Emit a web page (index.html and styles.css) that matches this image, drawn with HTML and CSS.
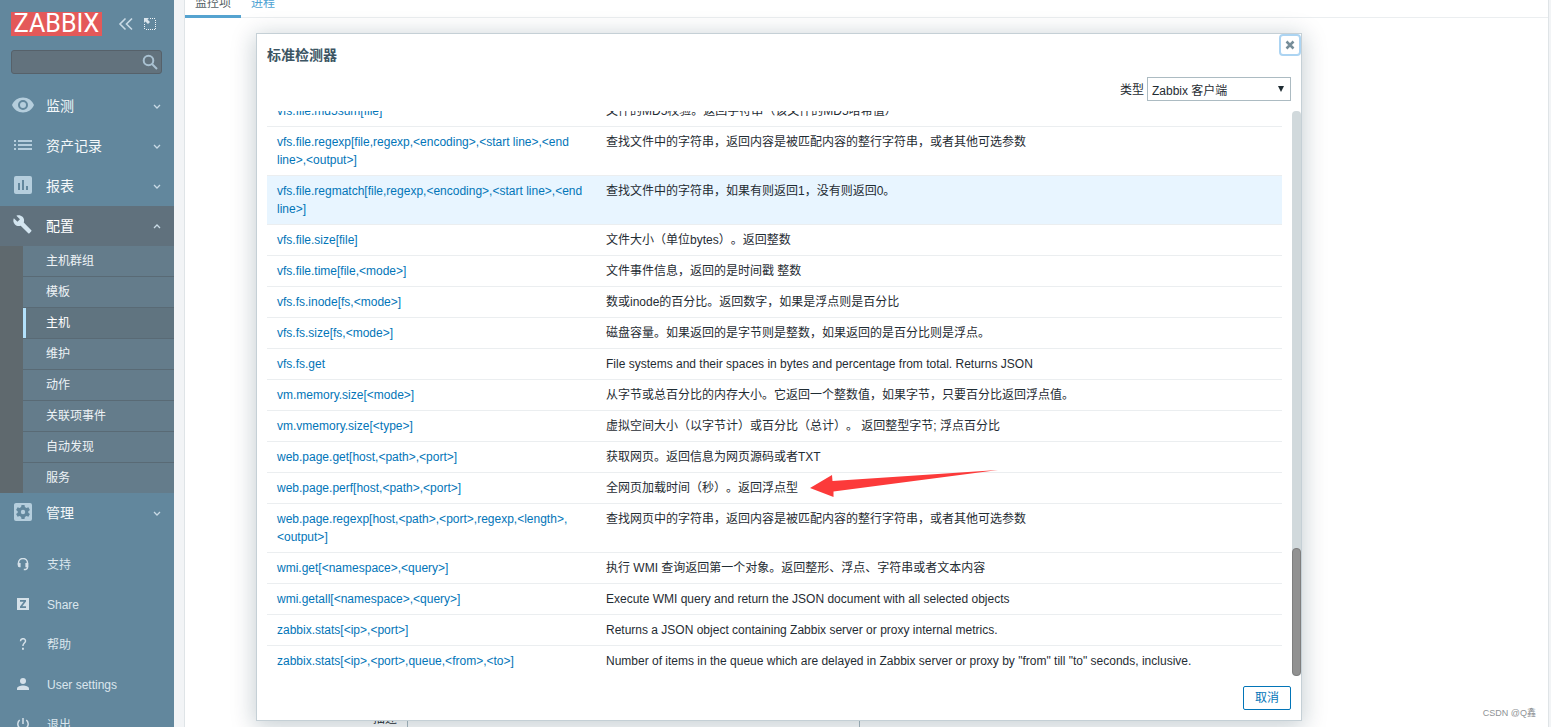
FILE: index.html
```html
<!DOCTYPE html>
<html lang="zh-CN">
<head>
<meta charset="utf-8">
<title>Zabbix</title>
<link rel="stylesheet" href="styles.css">
</head>
<body>
<aside class="sidebar">
  <div class="brand">
    <a class="logo" href="#">ZABBIX</a>
    <button class="icon-btn" type="button" aria-label="收起"><svg width="16" height="16" viewBox="0 0 16 16"><path d="M7.500 2.500L2 8l5.500 5.500M14 2.500L8.500 8l5.500 5.500"/></svg></button>
    <button class="icon-btn" type="button" aria-label="隐藏"><svg width="14" height="14" viewBox="0 0 14 14"><path class="dots" d="M7 1.500h6M12.500 3v10M1.500 7v6M3 12.500h9"/><path class="solid" d="M1 1h5L4.500 2.500 7 5 5 7 2.500 4.500 1 6z"/></svg></button>
  </div>
  <form class="search">
    <input class="search-input" type="text" aria-label="搜索">
    <button class="search-btn" type="button" aria-label="搜索"><svg width="16" height="16" viewBox="0 0 16 16"><circle cx="6.500" cy="6.500" r="4.800"/><path d="M10 10l5 5"/></svg></button>
  </form>
  <nav class="menu">
    <a class="menu-item" href="#"><svg class="menu-icon" viewBox="0 1 24 24"><path d="M12 4.500C7 4.500 2.700 7.600 1 12c1.700 4.400 6 7.500 11 7.500s9.300-3.100 11-7.500c-1.700-4.400-6-7.500-11-7.500zM12 17a5 5 0 1 1 0-10 5 5 0 0 1 0 10zm0-8a3 3 0 1 0 0 6 3 3 0 0 0 0-6z"/></svg><span>监测</span><svg class="chevron" viewBox="0 0 8 8"><path d="M1 3l3 3 3-3"/></svg></a>
    <a class="menu-item" href="#"><svg class="menu-icon" viewBox="0 1 24 24"><path d="M3 7h2v2H3zM3 11h2v2H3zM3 15h2v2H3zM7 7h14v2H7zM7 11h14v2H7zM7 15h14v2H7z"/></svg><span>资产记录</span><svg class="chevron" viewBox="0 0 8 8"><path d="M1 3l3 3 3-3"/></svg></a>
    <a class="menu-item" href="#"><svg class="menu-icon" viewBox="0 1 24 24"><path d="M19 3H5a2 2 0 0 0-2 2v14c0 1.100.9 2 2 2h14a2 2 0 0 0 2-2V5a2 2 0 0 0-2-2zM9 17H7v-7h2zm4 0h-2V7h2zm4 0h-2v-4h2z"/></svg><span>报表</span><svg class="chevron" viewBox="0 0 8 8"><path d="M1 3l3 3 3-3"/></svg></a>
    <a class="menu-item is-open" href="#"><svg class="menu-icon" viewBox="2.500 4 26 26"><path d="M24.500 21.500l-8.200-8.200c.8-2.100.4-4.500-1.300-6.200-1.800-1.800-4.500-2.200-6.700-1.200l3.900 3.900-2.700 2.700-3.900-3.900c-1.100 2.200-.6 4.900 1.200 6.700 1.700 1.700 4.100 2.100 6.200 1.300l8.200 8.200c.4.400.9.400 1.300 0l2-2c.4-.4.400-1 0-1.300z"/></svg><span>配置</span><svg class="chevron" viewBox="0 0 8 8"><path d="M1 6l3-3 3 3"/></svg></a>
    <ul class="submenu">
      <li><a href="#">主机群组</a></li>
      <li><a href="#">模板</a></li>
      <li class="is-selected"><a href="#">主机</a></li>
      <li><a href="#">维护</a></li>
      <li><a href="#">动作</a></li>
      <li><a href="#">关联项事件</a></li>
      <li><a href="#">自动发现</a></li>
      <li><a href="#">服务</a></li>
    </ul>
    <a class="menu-item" href="#"><svg class="menu-icon" viewBox="0 1 24 24"><path fill-rule="evenodd" d="M5 3h14a2 2 0 0 1 2 2v14a2 2 0 0 1-2 2H5a2 2 0 0 1-2-2V5c0-1.100.9-2 2-2zm5.500 2l-.4 2.100-1.500.9-2-.7-1.500 2.600 1.600 1.400v1.400l-1.600 1.400 1.500 2.600 2-.7 1.500.9.400 2.100h3l.4-2.100 1.500-.9 2 .7 1.500-2.600-1.600-1.400v-1.400l1.600-1.400-1.500-2.600-2 .7-1.500-.9-.4-2.100zM12 9.800a2.200 2.200 0 1 1 0 4.400 2.200 2.200 0 0 1 0-4.400z"/></svg><span>管理</span><svg class="chevron" viewBox="0 0 8 8"><path d="M1 3l3 3 3-3"/></svg></a>
  </nav>
  <nav class="user-menu">
    <a class="user-item" href="#"><svg class="user-icon" viewBox="0 1 14 14"><path class="line" d="M2.500 8V6a4.500 4.500 0 0 1 9 0V10c0 1.800-1 2.600-3.700 2.600"/><path d="M1.800 6h2.800v4.200H3.200a1.400 1.400 0 0 1-1.400-1.400zM9.400 6h2.800v4.200H9.400z"/></svg><span>支持</span></a>
    <a class="user-item" href="#"><svg class="user-icon" viewBox="0 1 14 14"><path fill-rule="evenodd" d="M1 1h12v12H1zm3 2v1.700h3.700L4 9.500V11h6V9.300H6.300L10 4.500V3z"/></svg><span>Share</span></a>
    <a class="user-item" href="#"><svg class="user-icon" viewBox="0 1 14 14"><path class="line" d="M4.500 4.200c0-3.400 5-3.200 5-.3 0 2.200-2.600 2.100-2.600 5"/><path d="M6 10.800h1.900v1.900H6z"/></svg><span>帮助</span></a>
    <a class="user-item" href="#"><svg class="user-icon" viewBox="0 1 14 14"><circle cx="7" cy="4" r="3"/><path d="M1 13v-1.500C1 9.500 4.500 8.500 7 8.500s6 1 6 3V13z"/></svg><span>User settings</span></a>
    <a class="user-item" href="#"><svg class="user-icon" viewBox="0 1 14 14"><path class="line" d="M7 1v6M3.700 3a5.200 5.200 0 1 0 6.600 0"/></svg><span>退出</span></a>
  </nav>
</aside>

<main class="page">
  <section class="panel">
    <nav class="tabs">
      <a class="tab is-current" href="#">监控项</a>
      <a class="tab" href="#">进程</a>
    </nav>
    <form class="item-form">
      <label class="form-label" for="description">描述</label>
      <textarea class="form-text" id="description"></textarea>
    </form>
  </section>
</main>

<div class="dialog" role="dialog" aria-labelledby="dialog-title">
  <button class="close-btn" type="button" aria-label="关闭"><svg width="10" height="10" viewBox="0 0 10 10"><path d="M1.500 1.500l7 7M8.500 1.500l-7 7"/></svg></button>
  <h1 class="dialog-title" id="dialog-title">标准检测器</h1>
  <div class="controls">
    <label for="type">类型</label>
    <span class="select-wrap"><select id="type"><option>Zabbix 客户端</option></select></span>
  </div>
  <div class="list">
    <div class="rows">
      <table>
        <tbody>
          <tr><td><a href="#">vfs.file.md5sum[file]</a></td><td>文件的MD5校验。返回字符串（该文件的MD5哈希值）</td></tr>
          <tr><td><a href="#">vfs.file.regexp[file,regexp,&lt;encoding&gt;,&lt;start line&gt;,&lt;end line&gt;,&lt;output&gt;]</a></td><td>查找文件中的字符串，返回内容是被匹配内容的整行字符串，或者其他可选参数</td></tr>
          <tr class="is-hover"><td><a href="#">vfs.file.regmatch[file,regexp,&lt;encoding&gt;,&lt;start line&gt;,&lt;end line&gt;]</a></td><td>查找文件中的字符串，如果有则返回1，没有则返回0。</td></tr>
          <tr><td><a href="#">vfs.file.size[file]</a></td><td>文件大小（单位bytes）。返回整数</td></tr>
          <tr><td><a href="#">vfs.file.time[file,&lt;mode&gt;]</a></td><td>文件事件信息，返回的是时间戳 整数</td></tr>
          <tr><td><a href="#">vfs.fs.inode[fs,&lt;mode&gt;]</a></td><td>数或inode的百分比。返回数字，如果是浮点则是百分比</td></tr>
          <tr><td><a href="#">vfs.fs.size[fs,&lt;mode&gt;]</a></td><td>磁盘容量。如果返回的是字节则是整数，如果返回的是百分比则是浮点。</td></tr>
          <tr><td><a href="#">vfs.fs.get</a></td><td>File systems and their spaces in bytes and percentage from total. Returns JSON</td></tr>
          <tr><td><a href="#">vm.memory.size[&lt;mode&gt;]</a></td><td>从字节或总百分比的内存大小。它返回一个整数值，如果字节，只要百分比返回浮点值。</td></tr>
          <tr><td><a href="#">vm.vmemory.size[&lt;type&gt;]</a></td><td>虚拟空间大小（以字节计）或百分比（总计）。 返回整型字节; 浮点百分比</td></tr>
          <tr><td><a href="#">web.page.get[host,&lt;path&gt;,&lt;port&gt;]</a></td><td>获取网页。返回信息为网页源码或者TXT</td></tr>
          <tr><td><a href="#">web.page.perf[host,&lt;path&gt;,&lt;port&gt;]</a></td><td><span class="marked">全网页加载时间（秒）。返回浮点型<svg class="arrow" width="188" height="28" viewBox="0 0 188 28"><path d="M0 18L22 5l.5 6L188 0 23.500 21.500V27z"/></svg></span></td></tr>
          <tr><td><a href="#">web.page.regexp[host,&lt;path&gt;,&lt;port&gt;,regexp,&lt;length&gt;,&lt;output&gt;]</a></td><td>查找网页中的字符串，返回内容是被匹配内容的整行字符串，或者其他可选参数</td></tr>
          <tr><td><a href="#">wmi.get[&lt;namespace&gt;,&lt;query&gt;]</a></td><td>执行 WMI 查询返回第一个对象。返回整形、浮点、字符串或者文本内容</td></tr>
          <tr><td><a href="#">wmi.getall[&lt;namespace&gt;,&lt;query&gt;]</a></td><td>Execute WMI query and return the JSON document with all selected objects</td></tr>
          <tr><td><a href="#">zabbix.stats[&lt;ip&gt;,&lt;port&gt;]</a></td><td>Returns a JSON object containing Zabbix server or proxy internal metrics.</td></tr>
          <tr><td><a href="#">zabbix.stats[&lt;ip&gt;,&lt;port&gt;,queue,&lt;from&gt;,&lt;to&gt;]</a></td><td>Number of items in the queue which are delayed in Zabbix server or proxy by "from" till "to" seconds, inclusive.</td></tr>
        </tbody>
      </table>
    </div>
    <div class="scrollbar"><div class="thumb"></div></div>
  </div>
  <div class="dialog-footer"><button class="cancel-btn" type="button">取消</button></div>
</div>
<div class="watermark">CSDN @Q鑫</div>
</body>
</html>
```

FILE: styles.css
```css
* { box-sizing: border-box; }

body {
  display: flex;
  height: 100vh;
  margin: 0;
  overflow: hidden;
  background: #f2f4f6;
  color: #1f2c33;
  font: 12px/18px "Liberation Sans", "Noto Sans CJK SC", sans-serif;
  text-spacing-trim: space-all;
}

a { color: #0275b8; text-decoration: none; }
button, select, input, textarea { font: inherit; }
button { padding: 0; border: 0; background: none; }

/* Sidebar */
.sidebar {
  flex: 0 0 174px;
  height: 100vh;
  overflow: hidden;
  background: #62879d;
}

.brand {
  display: flex;
  align-items: center;
  gap: 9px;
  padding: 12px 11px 0;
}

.logo {
  width: 91px;
  margin-right: 7px;
  background: #e45959;
  color: #fff;
  font: 25px/24px Roboto, sans-serif;
  text-align: center;
}

.icon-btn { display: flex; }
.icon-btn path { fill: none; stroke: #c9dae5; stroke-width: 1.6; }
.icon-btn .dots { stroke: #f0f5f8; stroke-width: 1; stroke-dasharray: 1 1; }
.icon-btn .solid { fill: #dbe6ed; stroke: none; }

.search { position: relative; margin: 14px 12px 12px 11px; }

.search-input {
  display: block;
  width: 100%;
  height: 24px;
  padding: 0 28px 0 6px;
  border: 1px solid #56616a;
  border-radius: 3px;
  background: #62727d;
  color: #fff;
}

.search-btn { position: absolute; top: 4px; right: 4px; display: flex; }
.search-btn svg { fill: none; stroke: #a9c1d1; stroke-width: 2; }

.menu-item {
  display: flex;
  align-items: center;
  height: 40px;
  padding: 0 13px 0 11px;
  color: #f4f8fa;
  font-size: 14px;
}

.menu-item span { flex: 1; }
.menu-icon { width: 24px; height: 24px; margin-right: 11px; fill: #b5cedd; }
.chevron { width: 8px; height: 8px; fill: none; stroke: #c9dae5; stroke-width: 1.3; }
.is-open { background: #60717d; color: #fff; }
.is-open .menu-icon { fill: #d3e5f0; }

.submenu {
  margin: 0;
  padding: 0 0 0 23px;
  background: #5f696e;
  list-style: none;
}

.submenu li { border-bottom: 1px solid #596a75; background: #647c8b; }
.submenu li:last-child { border-bottom: 0; }
.submenu a { display: block; padding: 6px 0 6px 23px; color: #eef3f6; }
.submenu .is-selected a {
  padding-left: 20px;
  border-left: 3px solid #b3e1fb;
  background: #607480;
  color: #fff;
}

.user-menu { padding-top: 12px; }
.user-item { display: flex; align-items: center; height: 40px; padding-left: 16px; color: #dbe6ed; }
.user-icon { width: 14px; height: 14px; margin-right: 17px; fill: #d5e1e9; }
.user-icon .line { fill: none; stroke: #d5e1e9; stroke-width: 1.5; }

/* Page behind the dialog */
.page { flex: 1; min-width: 0; padding: 0 2px 0 10px; }

.panel {
  display: flex;
  flex-direction: column;
  height: 100%;
  border: solid #dfe4e7;
  border-width: 0 1px;
  background: #fff;
}

.tabs { display: flex; height: 18px; border-bottom: 1px solid #ebeef0; }
.tab { height: 18px; padding: 0 10px; color: #4fa3d3; line-height: 6px; }
.is-current { border-bottom: 3px solid #55a3d0; color: #555f65; }

.item-form {
  display: grid;
  grid-template-columns: 212px 453px;
  gap: 10px;
  margin-top: 692px;
}

.form-label { text-align: right; color: #1f2c33; }
.form-text { height: 100px; border: 1px solid #acbbc2; resize: none; background: #fff; }

/* Dialog */
.dialog {
  position: absolute;
  top: 33px;
  right: 249px;
  left: 256px;
  padding-top: 9px;
  border: 1px solid #c5d0d6;
  background: #fff;
  box-shadow: 0 4px 22px 2px rgba(0, 40, 60, 0.22);
}

.close-btn {
  position: absolute;
  top: 0;
  right: 0;
  display: flex;
  align-items: center;
  justify-content: center;
  width: 22px;
  height: 22px;
  border: 2px solid #acd4f2;
  border-radius: 4px;
}

.close-btn svg { stroke: #768d99; stroke-width: 2.500; }

.dialog-title { margin: 0 10px; color: #3c5563; font-size: 14px; line-height: 24px; }

.controls {
  display: flex;
  align-items: flex-end;
  justify-content: flex-end;
  gap: 3px;
  margin: 10px 10px 10px;
  line-height: 22px;
}

.select-wrap { position: relative; width: 144px; }

.select-wrap select {
  display: block;
  width: 100%;
  height: 24px;
  padding: 2px 20px 0 4px;
  border: 1px solid #acbbc2;
  border-radius: 0;
  background: #fff;
  color: #1f2c33;
  appearance: none;
}

.select-wrap::after {
  content: "";
  position: absolute;
  top: 9px;
  right: 7px;
  border: solid transparent;
  border-width: 6px 3px 0;
  border-top-color: #1f2c33;
}

.list { display: flex; gap: 10px; height: calc(100vh - 162px); padding-left: 10px; }

.rows {
  display: flex;
  flex: 1;
  flex-direction: column;
  justify-content: flex-end;
  overflow: hidden;
}

table { width: 100%; border-spacing: 0; table-layout: fixed; }
td { padding: 6px 10px; border-bottom: 1px solid #ebeef0; vertical-align: top; }
td:first-child { width: 329px; }
tr:last-child td { border-bottom: 0; }
.is-hover td { background: #e8f5ff; }

.marked { position: relative; }
.arrow { position: absolute; top: -11px; left: 100%; margin-left: 12px; fill: #fc3a3a; }

.scrollbar {
  display: flex;
  align-items: flex-end;
  width: 9px;
  border-radius: 4px;
  background: #d1d9dc;
}

.thumb {
  width: 100%;
  height: 128px;
  border: 1px solid #7e7e7e;
  border-radius: 4px;
  background: #919191;
}

.dialog-footer { display: flex; justify-content: flex-end; padding: 10px; }

.cancel-btn {
  width: 48px;
  height: 24px;
  border: 1px solid #0275b8;
  border-radius: 2px;
  color: #0275b8;
}

.watermark { position: absolute; right: 15px; bottom: 5px; color: #8f9396; font-size: 9px; }
```
